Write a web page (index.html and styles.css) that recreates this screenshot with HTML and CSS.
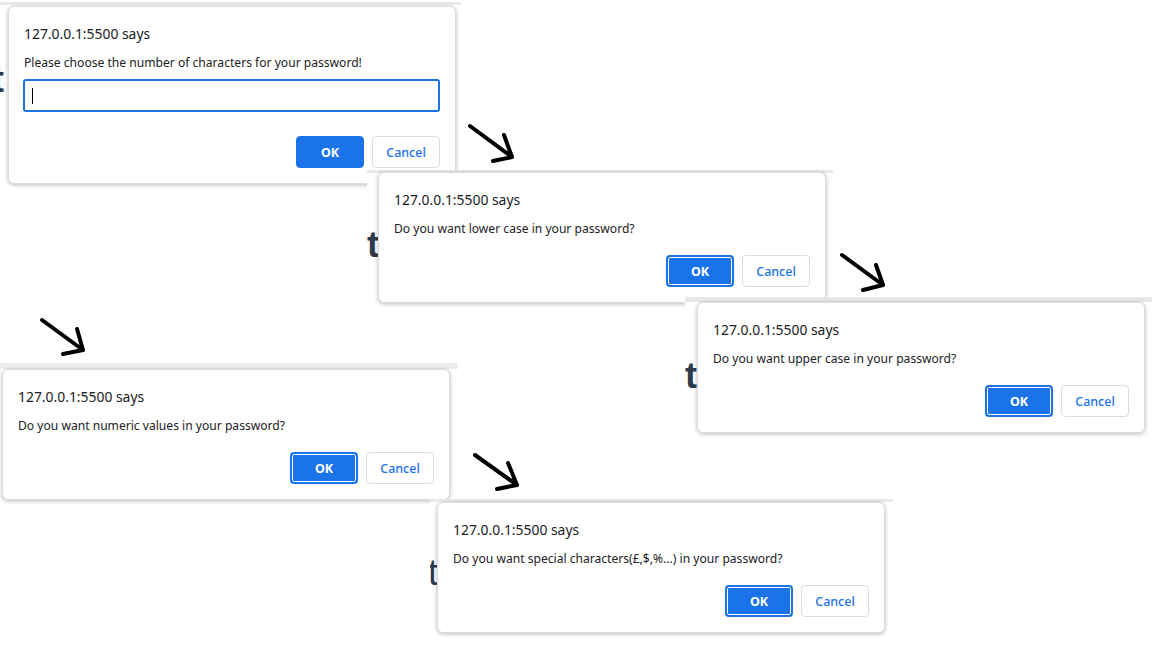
FILE: index.html
```html
<!DOCTYPE html>
<html>
<head>
<meta charset="utf-8">
<link rel="stylesheet" href="styles.css">
</head>
<body>
<div class="canvas">

  <div class="shot shot-1">
    <span class="bg-letter bg-letter-1">t</span>
    <div class="dialog">
      <div class="title">127.0.0.1:5500 says</div>
      <div class="message">Please choose the number of characters for your password!</div>
      <div class="field"><span class="caret"></span></div>
      <div class="actions actions-prompt">
        <button class="btn btn-ok">OK</button>
        <button class="btn btn-cancel">Cancel</button>
      </div>
    </div>
  </div>

  <div class="shot shot-2">
    <span class="bg-letter bg-letter-2">t</span>
    <div class="dialog">
      <div class="title">127.0.0.1:5500 says</div>
      <div class="message">Do you want lower case in your password?</div>
      <div class="actions">
        <button class="btn btn-ok focused">OK</button>
        <button class="btn btn-cancel">Cancel</button>
      </div>
    </div>
  </div>

  <div class="shot shot-3">
    <span class="bg-letter bg-letter-3">t</span>
    <div class="dialog">
      <div class="title">127.0.0.1:5500 says</div>
      <div class="message">Do you want upper case in your password?</div>
      <div class="actions">
        <button class="btn btn-ok focused">OK</button>
        <button class="btn btn-cancel">Cancel</button>
      </div>
    </div>
  </div>

  <div class="shot shot-4">
    <div class="dialog">
      <div class="title">127.0.0.1:5500 says</div>
      <div class="message">Do you want numeric values in your password?</div>
      <div class="actions">
        <button class="btn btn-ok focused">OK</button>
        <button class="btn btn-cancel">Cancel</button>
      </div>
    </div>
  </div>

  <div class="shot shot-5">
    <span class="bg-letter bg-letter-5">t</span>
    <div class="dialog">
      <div class="title">127.0.0.1:5500 says</div>
      <div class="message">Do you want special characters(£,$,%...) in your password?</div>
      <div class="actions">
        <button class="btn btn-ok focused">OK</button>
        <button class="btn btn-cancel">Cancel</button>
      </div>
    </div>
  </div>

  <svg class="arrows" width="1152" height="648" viewBox="0 0 1152 648">
    <g fill="none" stroke="#000" stroke-width="4" stroke-linecap="round" stroke-linejoin="round">
      <path d="M470 126 L512 157 M504 135 L512 157 L493 161"/>
      <path d="M842 255 L883 285 M876 265 L883 285 L863 290"/>
      <path d="M42 320 L83 350 M77 329 L83 350 L63 354"/>
      <path d="M475 455 L517 485 M508 463 L517 485 L497 489"/>
    </g>
  </svg>
</div>
</body>
</html>
```

FILE: styles.css
```css
* { box-sizing: border-box; }

html, body {
  margin: 0;
  padding: 0;
  background: #ffffff;
}

.canvas {
  position: relative;
  width: 1152px;
  height: 648px;
  overflow: hidden;
  font-family: "Noto Sans", "Open Sans", sans-serif;
  color: #202124;
}

.shot {
  position: absolute;
  overflow: hidden;
  background: linear-gradient(#e9e9ea 0, #e9e9ea 3px, #ffffff 3px);
}

.shot-1 { left: 0;   top: 2px;   width: 461px; height: 192px; padding: 4px 0 0 8px; }
.shot-2 { left: 367px; top: 170px; width: 466px; height: 140px; padding: 2px 0 0 11px; }
.shot-3 { left: 685px; top: 297px; width: 467px; height: 146px; padding: 5px 0 0 12px;
          background: linear-gradient(#e6e7e8 0, #e6e7e8 5px, #ffffff 5px); }
.shot-4 { left: 0;   top: 363px; width: 458px; height: 145px; padding: 6px 0 0 2px;
          background: linear-gradient(#ededee 0, #ededee 6px, #ffffff 6px); }
.shot-5 { left: 430px; top: 499px; width: 463px; height: 144px; padding: 3px 0 0 7px; }

.bg-letter {
  position: absolute;
  font-family: "Liberation Sans", Arial, sans-serif;
  font-weight: bold;
  font-size: 36px;
  line-height: 36px;
  color: #2c3a4b;
}
.bg-letter-1 { left: -8px; top: 60px; }
.bg-letter-2 { left: 0; top: 57px; }
.bg-letter-3 { left: 0; top: 61px; }
.bg-letter-5 { left: -2px; top: 56px; font-weight: normal; }

.dialog {
  position: relative;
  width: 448px;
  background: #ffffff;
  border-radius: 6px;
  border: 1px solid #dcdcdc;
  box-shadow: 0 1px 4px rgba(0, 0, 0, 0.28);
  padding: 15px 15px 15px 15px;
}

.title {
  font-size: 13.9px;
  line-height: 24px;
  height: 24px;
}

.message {
  margin-top: 7px;
  font-size: 12.1px;
  line-height: 20px;
  height: 20px;
}

.field {
  margin-top: 6px;
  height: 33px;
  width: 417px;
  margin-left: -1px;
  border: 2px solid #1a73e8;
  border-radius: 3px;
  padding: 6px 7px;
}

.caret {
  display: block;
  width: 1px;
  height: 16px;
  margin-top: 1px;
  background: #000;
}

.actions {
  display: flex;
  justify-content: flex-end;
  gap: 8px;
  margin-top: 16px;
}

.actions-prompt { margin-top: 24px; }

.btn {
  width: 68px;
  height: 32px;
  border-radius: 4px;
  font-family: "Noto Sans", "Open Sans", sans-serif;
  font-size: 12.5px;
  padding: 0;
  cursor: default;
}

.btn-ok {
  background: #1a73e8;
  border: 1px solid #1a73e8;
  color: #ffffff;
  font-weight: bold;
}

.btn-ok.focused {
  border: 2px solid #1a73e8;
  box-shadow: inset 0 0 0 1px #ffffff;
}

.btn-cancel {
  background: #ffffff;
  border: 1px solid #dadce0;
  color: #1a73e8;
  font-weight: 500;
}

.arrows {
  position: absolute;
  left: 0;
  top: 0;
  pointer-events: none;
}
```
